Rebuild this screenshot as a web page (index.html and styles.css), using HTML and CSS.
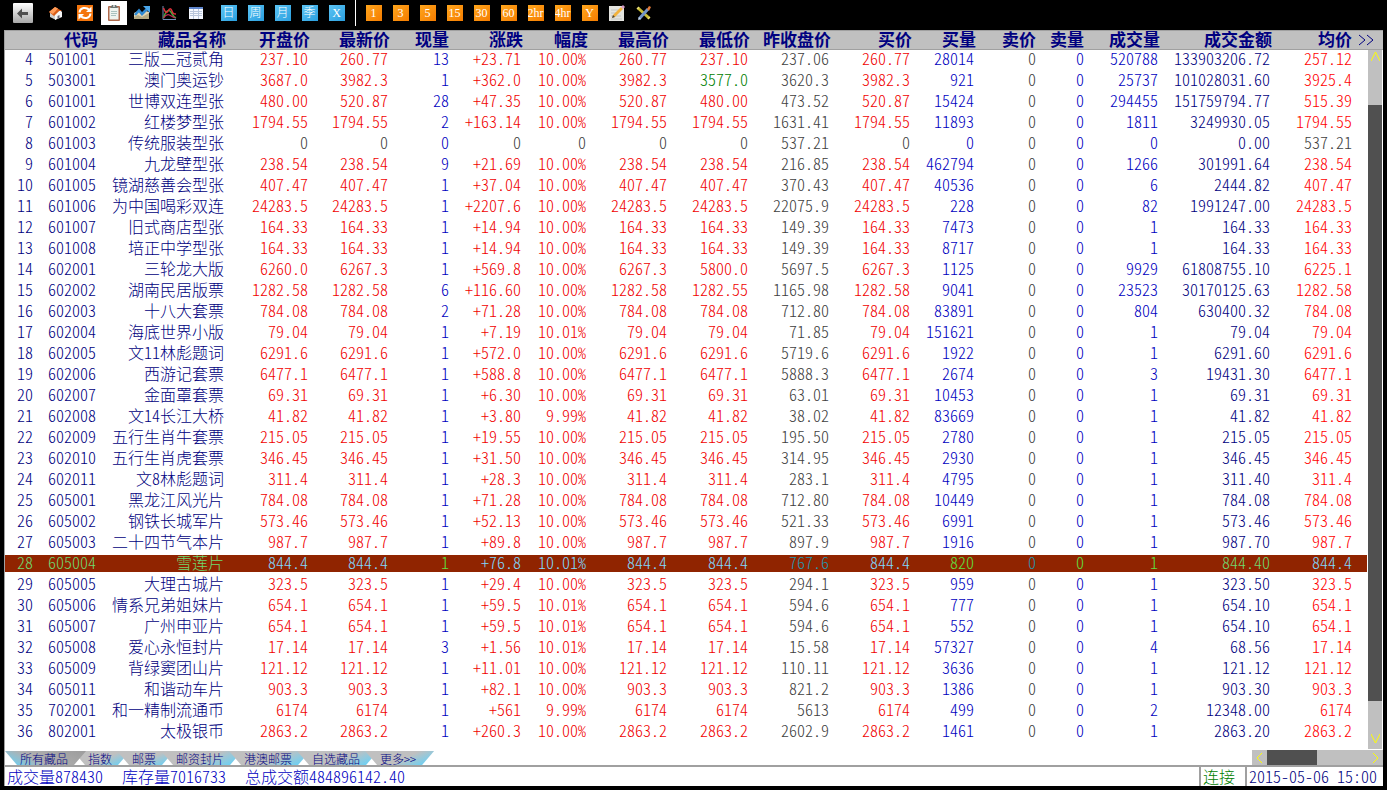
FILE: index.html
```html
<!DOCTYPE html>
<html lang="zh-CN">
<head>
<meta charset="utf-8">
<title>行情报价</title>
<link rel="stylesheet" href="styles.css">
</head>
<body>
<div class="app">
  <nav class="toolbar" aria-label="工具栏">
    <button class="tool tool-back" aria-label="返回">
      <svg width="20" height="20" viewBox="0 0 20 20"><defs><linearGradient id="gBack" x2="0" y2="1"><stop offset="0" stop-color="#fff"/><stop offset="1" stop-color="#a8a8a8"/></linearGradient></defs><rect width="20" height="20" rx="1" fill="url(#gBack)"/><path d="M4 10.500l5-5v3.500h6v3H9v3.500z" fill="#505050"/></svg>
    </button>
    <button class="tool tool-wide" aria-label="首页">
      <svg width="16" height="16" viewBox="0 0 16 16"><path d="M2 7l6 3v5l-6-3z" fill="#cfcfcf"/><path d="M7 9l5-4 2 2v5l-7 3z" fill="#f6f6f6"/><path d="M1 7l6-5 7 4-3 0-5 5z" fill="#d95c18"/><path d="M1 7l6-5 3 1.500L5 9z" fill="#ff9c58"/><path d="M9.500 11l2-1v3l-2 1z" fill="#667"/></svg>
    </button>
    <button class="tool tool-wide" aria-label="刷新">
      <svg width="16" height="16" viewBox="0 0 16 16"><rect width="16" height="16" fill="#f4750c"/><path d="M2.500 7.500C3 2.500 9 1.500 12.500 5M13.500 8.500C13 13.500 7 14.500 3.500 11" fill="none" stroke="#fff" stroke-width="2"/><path d="M14.500 1.500V7H9zM1.500 14.500V9H7z" fill="#fff"/></svg>
    </button>
    <button class="tool tool-wide" aria-label="报价表" aria-pressed="true">
      <svg width="26" height="24" viewBox="0 0 26 24"><rect width="26" height="24" fill="#fff"/><rect x="7" y="5" width="12" height="15" rx="1" fill="#b06a4c"/><rect x="8.500" y="6.500" width="9" height="12" fill="#eef4ef"/><path d="M10 10.500h6M10 12.500h6M10 14.500h5" stroke="#a9c2bf"/><path d="M9 7l2-3h4l2 3z" fill="#6b7774"/><circle cx="13" cy="5" r="1" fill="#ddd"/></svg>
    </button>
    <button class="tool" aria-label="走势">
      <svg width="16" height="16" viewBox="0 0 16 16"><path d="M0 8l4-2 4 3 4-3 3 1v7H0z" fill="#e2d6b4"/><path d="M0 12l4-2 4 2 7-4v6H0z" fill="#b5ab84"/><path d="M1 10l4-4.500 3 3.500 5-5" fill="none" stroke="#2f8ad2" stroke-width="2.600"/><path d="M9 1h7v7z" fill="#4aa6ea"/></svg>
    </button>
    <button class="tool" aria-label="曲线">
      <svg width="16" height="16" viewBox="0 0 16 16"><path d="M2 1v13.500h13" fill="none" stroke="#6f8fb8"/><path d="M2.500 13C5 5 8 4 10 7s2 5 5 6" fill="none" stroke="#48a83c" stroke-width="1.500"/><path d="M2.500 3c1.500 4 3 6 4.500 3s3-3 4 0 2 3 4 3" fill="none" stroke="#e0303a" stroke-width="1.500"/><path d="M2.500 13c2-3 4-4 6-3s3 2 6 3" fill="none" stroke="#c42a58" stroke-width="1.300"/></svg>
    </button>
    <button class="tool" aria-label="表格">
      <svg width="16" height="16" viewBox="0 0 16 16"><rect x="1" y="2" width="14" height="12" fill="#f5f8ff"/><rect x="1" y="2" width="14" height="2" fill="#5f86cc"/><path d="M2 6.500h12M2 8.500h12M2 10.500h12M5.500 4v10M10.500 4v10" stroke="#b9c6dc"/></svg>
    </button>
    <div class="periods">
      <button class="tool"><span class="key key-blue">日</span></button>
      <button class="tool"><span class="key key-blue">周</span></button>
      <button class="tool"><span class="key key-blue">月</span></button>
      <button class="tool"><span class="key key-blue">季</span></button>
      <button class="tool"><span class="key key-blue">X</span></button>
    </div>
    <div class="minutes">
      <button class="tool"><span class="key">1</span></button>
      <button class="tool"><span class="key">3</span></button>
      <button class="tool"><span class="key">5</span></button>
      <button class="tool"><span class="key">15</span></button>
      <button class="tool"><span class="key">30</span></button>
      <button class="tool"><span class="key">60</span></button>
      <button class="tool"><span class="key">2hr</span></button>
      <button class="tool"><span class="key">4hr</span></button>
      <button class="tool"><span class="key">Y</span></button>
    </div>
    <button class="tool" aria-label="编辑">
      <svg width="16" height="16" viewBox="0 0 16 16"><rect y="1" width="15" height="15" fill="#e4e4e0"/><path d="M2 5h9M2 8h7M2 11h10M2 14h11" stroke="#c2c5c2"/><path d="M3 13l1-3 8-8 2 2-8 8z" fill="#f2b23d"/><path d="M3 13l1-3 2 2z" fill="#444"/><path d="M12 2l2-2 2 2-2 2z" fill="#d8a0c8"/></svg>
    </button>
    <button class="tool" aria-label="工具">
      <svg width="16" height="16" viewBox="0 0 16 16"><path d="M2 3l11 10" stroke="#c9bd35" stroke-width="3"/><path d="M1 4l2-2M12 14l2-2" stroke="#eee27a" stroke-width="1.500"/><path d="M3 14l9-10" stroke="#7295c8" stroke-width="3"/><path d="M11 4l2-3 2 1-2 4z" fill="#e47b38"/><path d="M2 15l1-3 2 2z" fill="#ccd9e8"/></svg>
    </button>
  </nav>

  <main class="panel">
    <div class="sheet">
      <table class="quotes">
        <colgroup>
          <col class="w30"><col class="w63"><col class="w128"><col class="w84"><col class="w80"><col class="w61"><col class="w72"><col class="w65"><col class="w81"><col class="w81"><col class="w81"><col class="w81"><col class="w64"><col class="w62"><col class="w48"><col class="w74"><col class="w112"><col class="w82"><col class="w13">
        </colgroup>
        <thead>
          <tr><th></th><th>代码</th><th>藏品名称</th><th>开盘价</th><th>最新价</th><th class="flush">现量</th><th>涨跌</th><th>幅度</th><th>最高价</th><th>最低价</th><th>昨收盘价</th><th>买价</th><th>买量</th><th class="flush">卖价</th><th class="flush">卖量</th><th>成交量</th><th>成交金额</th><th class="flush">均价</th><th></th></tr>
        </thead>
        <tbody id="rows"></tbody>
      </table>
      <div class="rail">
        <div class="rail-head"></div>
        <div class="vbar">
          <button class="arrow" aria-label="向上"><svg width="9" height="10" viewBox="0 0 9 10"><path d="M0 10l4.500-9L9 10"/></svg></button>
          <div class="vthumb"></div>
          <button class="arrow" aria-label="向下"><svg width="9" height="10" viewBox="0 0 9 10"><path d="M0 0l4.500 9L9 0"/></svg></button>
        </div>
      </div>
      <button class="more" aria-label="更多列"><svg width="16" height="12" viewBox="0 0 16 12"><path d="M1 1l6 5-6 5M9 1l6 5-6 5"/></svg></button>
    </div>

    <div class="bottom">
      <div class="tabs">
        <button class="tab tab-on">所有藏品</button>
        <button class="tab">指数</button>
        <button class="tab">邮票</button>
        <button class="tab">邮资封片</button>
        <button class="tab">港澳邮票</button>
        <button class="tab">自选藏品</button>
        <button class="tab">更多&gt;&gt;</button>
      </div>
      <div class="hbar">
        <button class="arrow" aria-label="向左"><svg width="7" height="12" viewBox="0 0 7 12"><path d="M6 1L1 6l5 5"/></svg></button>
        <div class="hthumb"></div>
        <button class="arrow arrow-end" aria-label="向右"><svg width="7" height="12" viewBox="0 0 7 12"><path d="M1 1l5 5-5 5"/></svg></button>
      </div>
    </div>
    <footer class="status">
      <div class="totals"><span>成交量878430</span><span>库存量7016733</span><span>总成交额484896142.40</span></div>
      <div class="link">连接</div>
      <div class="clock">2015-05-06 15:00</div>
    </footer>
  </main>
</div>
<script src="quotes.js"></script>
</body>
</html>
```
FILE: styles.css
```css
* { box-sizing: border-box; }

body {
  margin: 0;
  background: #000;
  font: 300 16px/17px "Noto Sans CJK SC", sans-serif;
  font-feature-settings: "hwid";
  color: #000080;
}

button {
  margin: 0;
  padding: 0;
  border: 0;
  background: none;
  font: inherit;
  font-feature-settings: inherit;
  color: inherit;
}

svg { display: block; }

.app {
  display: flex;
  flex-direction: column;
  min-height: 100vh;
  padding: 0 4px 4px;
}

/* toolbar */
.toolbar {
  display: flex;
  align-items: center;
  height: 30px;
  padding: 0 1px 4px;
}
.tool {
  display: flex;
  justify-content: center;
  align-items: center;
  width: 27px;
  height: 26px;
}
.tool-back { width: 36px; }
.tool-wide { width: 29px; }
.periods, .minutes { display: flex; }
.periods { margin-left: 6px; }
.minutes {
  margin-left: 5px;
  padding-left: 4px;
  border-left: 1px solid #fff;
}
.key {
  display: flex;
  justify-content: center;
  width: 16px;
  height: 16px;
  overflow: hidden;
  background: linear-gradient(135deg, #ffa61c, #f57c00);
  color: #fff;
  font-family: "Liberation Serif", "Noto Sans CJK SC", serif;
  font-size: 12px;
  line-height: 16px;
}
.key-blue { background: linear-gradient(135deg, #5cc4f4, #2a9fdf); }

/* panel */
.panel {
  display: flex;
  flex-direction: column;
  flex: 1;
  background: #fff;
  border-left: 1px solid #a0a0a0;
}
.sheet {
  position: relative;
  display: flex;
  flex: 1;
  align-items: stretch;
}
.quotes {
  flex: 1;
  align-self: flex-start;
  table-layout: fixed;
  width: 0;
  border-spacing: 0;
  text-align: right;
  white-space: nowrap;
}
th, .rail-head {
  height: 20px;
  background: #c0c0c0;
  border-top: 1px solid #a0a0a0;
  border-bottom: 1px solid #a0a0a0;
}
th {
  padding: 0 0 2px;
  font-size: 17px;
  line-height: 16px;
  text-align: right;
}
.flush { padding-right: 2px; }
td {
  padding: 0 2px 2px 0;
  border-top: 1px solid transparent;
  border-bottom: 3px solid transparent;
  background-clip: padding-box;
  line-height: 15px;
}
.w13 { width: 13px; }
.w30 { width: 30px; }
.w48 { width: 48px; }
.w61 { width: 61px; }
.w62 { width: 62px; }
.w63 { width: 63px; }
.w64 { width: 64px; }
.w65 { width: 65px; }
.w72 { width: 72px; }
.w74 { width: 74px; }
.w80 { width: 80px; }
.w81 { width: 81px; }
.w82 { width: 82px; }
.w84 { width: 84px; }
.w112 { width: 112px; }
.w128 { width: 128px; }

.up { color: #f00000; }
.down { color: #008000; }
.flat { color: #404040; }
.vol { color: #0000c0; }
.avg { color: #ff0000; }

.selected td { background-color: #902400; color: #70d870; }
.selected .up, .selected .avg { color: #80d8ff; }
.selected .vol { color: #60e040; }
.selected .flat { color: #2498b0; }

/* scrollbars */
.rail {
  display: flex;
  flex-direction: column;
  width: 16px;
}
.vbar {
  display: flex;
  flex-direction: column;
  flex: 1;
  margin: 0 1px 1px;
  padding: 1px 0 5px;
  background: #c0c0c0;
}
.vthumb {
  flex: 1;
  margin: 44px 0 33px;
  background: #505050;
}
.arrow {
  display: flex;
  justify-content: center;
  width: 15px;
}
.arrow path, .more path { fill: none; stroke: #ffff00; }
.more path { stroke: #000080; }
.more {
  position: absolute;
  top: 4px;
  right: 9px;
}
.bottom {
  display: flex;
  justify-content: space-between;
  border-bottom: 2px solid #a0a0a0;
}
.hbar {
  display: flex;
  align-items: center;
  width: 131px;
  height: 15px;
  background: #c0c0c0;
}
.hthumb {
  width: 50px;
  height: 15px;
  background: #505050;
}
.arrow-end { margin-left: auto; }

/* tabs */
.tabs { display: flex; padding-top: 1px; }
.tab {
  height: 14px;
  padding: 0 18px 0 15px;
  margin-right: -13px;
  background: linear-gradient(155deg, #c0c0c0 55%, #6cd0f4 90%);
  clip-path: polygon(0 0, 100% 0, calc(100% - 12px) 100%, 12px 100%);
  font-size: 12px;
  line-height: 15px;
}
.tab-on {
  position: relative;
  z-index: 1;
  background: linear-gradient(25deg, #6cd0f4 5%, #b0b0b0 40%, #9c9c9c);
}

/* status line */
.status {
  display: flex;
  height: 19px;
  line-height: 18px;
  color: #0000c0;
}
.totals {
  display: flex;
  flex: 1;
  gap: 19px;
  padding-left: 2px;
}
.link, .clock { border-left: 2px solid #a0a0a0; }
.link { width: 46px; padding-left: 2px; color: #008000; }
.clock { width: 138px; padding-left: 2px; color: #000080; }
```
FILE: quotes.js
```js
// code, name, open, last, volume now, change, percent, high, low, previous close, bid, bid volume, volume, turnover, average
const quotes = `501001 三版二冠贰角 237.10 260.77 13 +23.71 10.00% 260.77 237.10 237.06 260.77 28014 520788 133903206.72 257.12
503001 澳门奥运钞 3687.0 3982.3 1 +362.0 10.00% 3982.3 3577.0 3620.3 3982.3 921 25737 101028031.60 3925.4
601001 世博双连型张 480.00 520.87 28 +47.35 10.00% 520.87 480.00 473.52 520.87 15424 294455 151759794.77 515.39
601002 红楼梦型张 1794.55 1794.55 2 +163.14 10.00% 1794.55 1794.55 1631.41 1794.55 11893 1811 3249930.05 1794.55
601003 传统服装型张 0 0 0 0 0 0 0 537.21 0 0 0 0.00 537.21
601004 九龙壁型张 238.54 238.54 9 +21.69 10.00% 238.54 238.54 216.85 238.54 462794 1266 301991.64 238.54
601005 镜湖慈善会型张 407.47 407.47 1 +37.04 10.00% 407.47 407.47 370.43 407.47 40536 6 2444.82 407.47
601006 为中国喝彩双连 24283.5 24283.5 1 +2207.6 10.00% 24283.5 24283.5 22075.9 24283.5 228 82 1991247.00 24283.5
601007 旧式商店型张 164.33 164.33 1 +14.94 10.00% 164.33 164.33 149.39 164.33 7473 1 164.33 164.33
601008 培正中学型张 164.33 164.33 1 +14.94 10.00% 164.33 164.33 149.39 164.33 8717 1 164.33 164.33
602001 三轮龙大版 6260.0 6267.3 1 +569.8 10.00% 6267.3 5800.0 5697.5 6267.3 1125 9929 61808755.10 6225.1
602002 湖南民居版票 1282.58 1282.58 6 +116.60 10.00% 1282.58 1282.55 1165.98 1282.58 9041 23523 30170125.63 1282.58
602003 十八大套票 784.08 784.08 2 +71.28 10.00% 784.08 784.08 712.80 784.08 83891 804 630400.32 784.08
602004 海底世界小版 79.04 79.04 1 +7.19 10.01% 79.04 79.04 71.85 79.04 151621 1 79.04 79.04
602005 文11林彪题词 6291.6 6291.6 1 +572.0 10.00% 6291.6 6291.6 5719.6 6291.6 1922 1 6291.60 6291.6
602006 西游记套票 6477.1 6477.1 1 +588.8 10.00% 6477.1 6477.1 5888.3 6477.1 2674 3 19431.30 6477.1
602007 金面罩套票 69.31 69.31 1 +6.30 10.00% 69.31 69.31 63.01 69.31 10453 1 69.31 69.31
602008 文14长江大桥 41.82 41.82 1 +3.80 9.99% 41.82 41.82 38.02 41.82 83669 1 41.82 41.82
602009 五行生肖牛套票 215.05 215.05 1 +19.55 10.00% 215.05 215.05 195.50 215.05 2780 1 215.05 215.05
602010 五行生肖虎套票 346.45 346.45 1 +31.50 10.00% 346.45 346.45 314.95 346.45 2930 1 346.45 346.45
602011 文8林彪题词 311.4 311.4 1 +28.3 10.00% 311.4 311.4 283.1 311.4 4795 1 311.40 311.4
605001 黑龙江风光片 784.08 784.08 1 +71.28 10.00% 784.08 784.08 712.80 784.08 10449 1 784.08 784.08
605002 钢铁长城军片 573.46 573.46 1 +52.13 10.00% 573.46 573.46 521.33 573.46 6991 1 573.46 573.46
605003 二十四节气本片 987.7 987.7 1 +89.8 10.00% 987.7 987.7 897.9 987.7 1916 1 987.70 987.7
605004 雪莲片 844.4 844.4 1 +76.8 10.01% 844.4 844.4 767.6 844.4 820 1 844.40 844.4
605005 大理古城片 323.5 323.5 1 +29.4 10.00% 323.5 323.5 294.1 323.5 959 1 323.50 323.5
605006 情系兄弟姐妹片 654.1 654.1 1 +59.5 10.01% 654.1 654.1 594.6 654.1 777 1 654.10 654.1
605007 广州申亚片 654.1 654.1 1 +59.5 10.01% 654.1 654.1 594.6 654.1 552 1 654.10 654.1
605008 爱心永恒封片 17.14 17.14 3 +1.56 10.01% 17.14 17.14 15.58 17.14 57327 4 68.56 17.14
605009 背绿窦团山片 121.12 121.12 1 +11.01 10.00% 121.12 121.12 110.11 121.12 3636 1 121.12 121.12
605011 和谐动车片 903.3 903.3 1 +82.1 10.00% 903.3 903.3 821.2 903.3 1386 1 903.30 903.3
702001 和一精制流通币 6174 6174 1 +561 9.99% 6174 6174 5613 6174 499 2 12348.00 6174
802001 太极银币 2863.2 2863.2 1 +260.3 10.00% 2863.2 2863.2 2602.9 2863.2 1461 1 2863.20 2863.2`;

const firstNumber = 4;
const selectedCode = "605004";

function rowHtml(line, i) {
  const [code, name, open, last, now, change, percent, high, low, prev, bid, bidVol, vol, turnover, avg] = line.split(" ");
  const tone = v => v === "0" || +v === +prev ? "flat" : +v < +prev ? "down" : "up";
  const delta = v => v === "0" ? "flat" : "up";
  const cells = [
    [firstNumber + i, ""], [code, ""], [name, ""],
    [open, tone(open)], [last, tone(last)], [now, "vol"],
    [change, delta(change)], [percent, delta(percent)],
    [high, tone(high)], [low, tone(low)], [prev, "flat"],
    [bid, tone(bid)], [bidVol, "vol"], ["0", "flat"], ["0", "vol"],
    [vol, "vol"], [turnover, ""], [avg, tone(avg) === "flat" ? "flat" : "avg"], ["", ""]
  ];
  const cls = code === selectedCode ? ' class="selected"' : "";
  return `<tr${cls}>` + cells.map(([text, c]) => `<td class="${c}">${text}</td>`).join("") + "</tr>";
}

document.getElementById("rows").innerHTML = quotes.split("\n").map(rowHtml).join("");
```
